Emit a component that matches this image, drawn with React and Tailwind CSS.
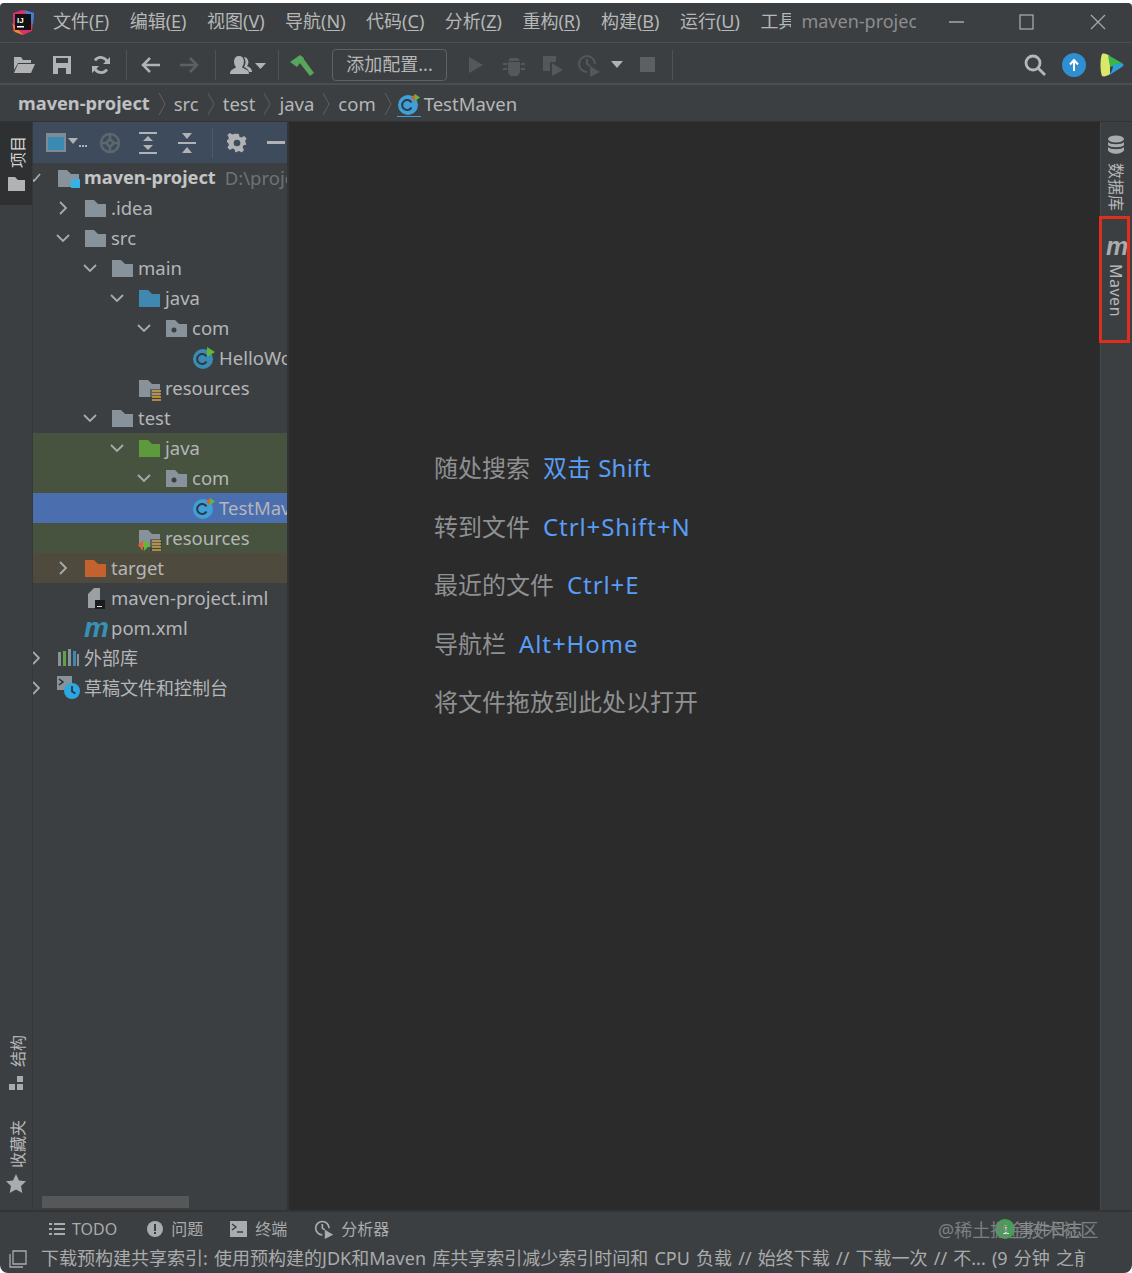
import React from 'react';

const FONT = "font-['Noto_Sans','Noto_Sans_CJK_SC',sans-serif]";

const Folder = ({ color = '#87929a', children }) => (
  <svg width="23" height="20" viewBox="0 0 23 20" className="shrink-0 overflow-visible">
    <path d="M1 2h9l4 4h8v13H1z" fill={color} />
    {children}
  </svg>
);

const ClassIcon = ({ color = '#3b8cb4', run = '#5fb83a', test }) => (
  <svg width="24" height="24" viewBox="0 0 24 24" className="shrink-0">
    <circle cx="11" cy="13" r="10" fill={color} />
    <path d="M14.5 10.5a5 5 0 1 0 0 5" fill="none" stroke="#2b3a44" strokeWidth="2" />
    {test ? (
      <>
        <path d="M14 6l4-4v7z" fill="#d8632f" />
        <path d="M18 2l5 3.500-5 3.500z" fill="#5fb83a" />
      </>
    ) : (
      <path d="M15 1l8 5-8 5z" fill={run} />
    )}
  </svg>
);

const MavenM = ({ color = '#3592b5', size = 23 }) => (
  <span className={`inline-block font-['Liberation_Sans',sans-serif] font-bold italic leading-none shrink-0`} style={{ color, fontSize: size + 5, width: size }}>
    m
  </span>
);

const treeRows = [
  { level: 0, arrow: 'check', icon: 'module', label: 'maven-project', bold: true, note: 'D:\\project\\maven-project' },
  { level: 1, arrow: 'right', icon: 'folder', label: '.idea' },
  { level: 1, arrow: 'down', icon: 'folder', label: 'src' },
  { level: 2, arrow: 'down', icon: 'folder', label: 'main' },
  { level: 3, arrow: 'down', icon: 'blue', label: 'java' },
  { level: 4, arrow: 'down', icon: 'package', label: 'com' },
  { level: 5, icon: 'class', label: 'HelloWorld' },
  { level: 3, icon: 'res', label: 'resources' },
  { level: 2, arrow: 'down', icon: 'folder', label: 'test' },
  { level: 3, arrow: 'down', icon: 'green', label: 'java', bg: 'bg-[#47523f]' },
  { level: 4, arrow: 'down', icon: 'package', label: 'com', bg: 'bg-[#47523f]' },
  { level: 5, icon: 'test', label: 'TestMaven', bg: 'bg-[#4b6eaf]' },
  { level: 3, icon: 'testres', label: 'resources', bg: 'bg-[#47523f]' },
  { level: 1, arrow: 'right', icon: 'orange', label: 'target', bg: 'bg-[#4f4a3e]' },
  { level: 1, icon: 'iml', label: 'maven-project.iml' },
  { level: 1, icon: 'pom', label: 'pom.xml' },
  { level: 0, arrow: 'right', icon: 'lib', label: '外部库', cjk: true },
  { level: 0, arrow: 'right', icon: 'scratch', label: '草稿文件和控制台', cjk: true },
];

const Arrow = ({ type }) => {
  if (!type) return null;
  const d = { right: 'M4 1l6 6-6 6', down: 'M1 4l6 6 6-6', check: 'M2 7l3 3 6-7' }[type];
  return (
    <svg width="14" height="14" viewBox="0 0 14 14" className="-ml-[4px] shrink-0" fill="none" stroke="#a8abad" strokeWidth="1.800">
      <path d={d} />
    </svg>
  );
};

const ResLines = () => (
  <>
    <rect x="12" y="11" width="12" height="12" fill="#3c3f41" opacity="0.6" />
    <path d="M14 13h9M14 16h9M14 19h9M14 22h9" stroke="#d6a13c" strokeWidth="1.600" />
  </>
);

const TreeIcon = ({ icon }) => {
  switch (icon) {
    case 'module':
      return (
        <Folder>
          <rect x="14" y="11" width="9" height="9" fill="#36b3e4" />
        </Folder>
      );
    case 'blue':
      return <Folder color="#3f88b0" />;
    case 'green':
      return <Folder color="#5c9a3d" />;
    case 'orange':
      return <Folder color="#c4622d" />;
    case 'package':
      return (
        <Folder>
          <circle cx="9" cy="12" r="2.500" fill="#3c3f41" />
        </Folder>
      );
    case 'res':
      return (
        <Folder>
          <ResLines />
        </Folder>
      );
    case 'testres':
      return (
        <Folder>
          <ResLines />
          <path d="M0 17l5-5v11z" fill="#d8632f" />
          <path d="M6 12l6 5-6 6z" fill="#5fb83a" />
        </Folder>
      );
    case 'class':
      return <ClassIcon />;
    case 'test':
      return <ClassIcon color="#3f9fd6" test />;
    case 'iml':
      return (
        <svg width="23" height="24" viewBox="0 0 23 24" className="shrink-0">
          <path d="M4 8l6-6h6v20H4z" fill="#9aa0a4" />
          <rect x="11" y="14" width="10" height="9" fill="#1c1c1c" />
          <rect x="13" y="20" width="5" height="1" fill="#ddd" />
        </svg>
      );
    case 'pom':
      return <MavenM />;
    case 'lib':
      return (
        <svg width="23" height="20" viewBox="0 0 23 20" className="shrink-0">
          <rect x="1" y="4" width="3" height="14" fill="#87929a" />
          <rect x="6" y="3" width="3" height="15" fill="#5fa346" />
          <rect x="11" y="1" width="3" height="17" fill="#87929a" />
          <rect x="16" y="3" width="3" height="15" fill="#3f88b0" />
          <rect x="20" y="6" width="2" height="12" fill="#87929a" />
        </svg>
      );
    case 'scratch':
      return (
        <svg width="24" height="24" viewBox="0 0 24 24" className="shrink-0">
          <rect x="0" y="0" width="15" height="14" fill="#87929a" />
          <path d="M2 3l4 3-4 3" fill="none" stroke="#2b2b2b" strokeWidth="1.500" />
          <circle cx="15" cy="15" r="8" fill="#2ea6e0" />
          <path d="M15 10v5.500l3.500 2" fill="none" stroke="#23323b" strokeWidth="1.600" />
        </svg>
      );
    default:
      return <Folder />;
  }
};

const TreeRow = ({ row }) => (
  <div className={`flex h-[30px] items-center whitespace-nowrap overflow-hidden ${row.bg || ''}`} style={{ paddingLeft: row.level * 27 }}>
    <span className="w-[6px] shrink-0 flex items-center overflow-visible">
      <Arrow type={row.arrow} />
    </span>
    <span className="ml-[18px] w-[27px] shrink-0 flex items-center">
      <TreeIcon icon={row.icon} />
    </span>
    <span className={`${row.bold ? 'font-bold text-[18.200px] text-[#c4c4c4]' : 'text-[#b4b6b8]'} ${row.cjk ? 'text-[18px]' : ''}`}>{row.label}</span>
    {row.note && <span className="ml-[9px] text-[#6f7274]">{row.note}</span>}
  </div>
);

const menus = [
  ['文件(', 'F', ')'],
  ['编辑(', 'E', ')'],
  ['视图(', 'V', ')'],
  ['导航(', 'N', ')'],
  ['代码(', 'C', ')'],
  ['分析(', 'Z', ')'],
  ['重构(', 'R', ')'],
  ['构建(', 'B', ')'],
  ['运行(', 'U', ')'],
];

const hints = [
  ['随处搜索', '双击 Shift', 'tracking-[0.3px]'],
  ['转到文件', 'Ctrl+Shift+N', 'tracking-[0.9px]'],
  ['最近的文件', 'Ctrl+E', 'tracking-[0.9px]'],
  ['导航栏', 'Alt+Home', 'tracking-[0.9px]'],
  ['将文件拖放到此处以打开', '', ''],
];

const Sep = ({ className = '' }) => <div className={`w-px h-[30px] bg-[#505355] shrink-0 ${className}`} />;

const Crumb = () => (
  <svg width="10" height="26" viewBox="0 0 10 26" className="mx-[3px] shrink-0" fill="none" stroke="#5f6264" strokeWidth="1">
    <path d="M2 2l6 11-6 11" />
  </svg>
);

function TitleBar() {
  return (
    <div className="h-[40px] flex items-center pb-[2px] border-b border-[#4b4e50] shrink-0">
      <svg width="26" height="26" viewBox="0 0 26 26" className="ml-[10px] shrink-0">
        <path d="M3 4l9-3 12 3-2 18-9 4-10-4z" fill="#d6336c" />
        <path d="M14 1l10 3-1 12z" fill="#3b82d8" />
        <path d="M2 14l3 9 8 3z" fill="#f08a24" />
        <rect x="5" y="5" width="16" height="16" fill="#111" />
        <text x="7" y="14" fontSize="8" fontWeight="700" fill="#fff" fontFamily="Liberation Sans">IJ</text>
        <rect x="7" y="17" width="7" height="1.500" fill="#fff" />
      </svg>
      <div className="ml-[17px] flex gap-[20.500px] text-[18px] text-[#b5b7b8] whitespace-nowrap">
        {menus.map(([a, key, c]) => (
          <span key={key}>
            {a}
            <span className="underline underline-offset-2">{key}</span>
            {c}
          </span>
        ))}
        <span className="w-[31px] overflow-hidden">工具</span>
      </div>
      <span className="ml-[10px] w-[115px] overflow-hidden whitespace-nowrap text-[18px] text-[#8b8d8f]">maven-project</span>
      <svg width="16" height="16" viewBox="0 0 16 16" className="ml-[33px] shrink-0" stroke="#a5a7a8" strokeWidth="1.300" fill="none">
        <path d="M0 8h15" />
      </svg>
      <svg width="16" height="16" viewBox="0 0 16 16" className="ml-[54px] shrink-0" stroke="#a5a7a8" strokeWidth="1.300" fill="none">
        <rect x="1" y="1" width="13" height="14" />
      </svg>
      <svg width="16" height="16" viewBox="0 0 16 16" className="ml-[55px] shrink-0" stroke="#a5a7a8" strokeWidth="1.300" fill="none">
        <path d="M1 1l14 14M15 1L1 15" />
      </svg>
    </div>
  );
}

function ToolBar() {
  return (
    <div className="h-[42px] flex items-center pt-[3px] border-b-2 border-[#4b4e50] shrink-0">
      <svg width="22" height="20" viewBox="0 0 22 20" className="ml-[13px] shrink-0" fill="#b0b2b3">
        <path d="M1 2h7l2 3h8v3H5L1 15z" />
        <path d="M5 9h17l-4 9H1z" />
      </svg>
      <svg width="20" height="20" viewBox="0 0 20 20" className="ml-[17px] shrink-0">
        <path d="M1 1h18v18H1z" fill="#b0b2b3" />
        <rect x="4" y="3" width="12" height="5" fill="#3c3f41" />
        <rect x="6" y="13" width="8" height="6" fill="#3c3f41" />
      </svg>
      <svg width="20" height="20" viewBox="0 0 20 20" className="ml-[19px] shrink-0">
        <path d="M16.500 7.500A7 7 0 0 0 4 5.500M3.500 12.500A7 7 0 0 0 16 14.500" fill="none" stroke="#b0b2b3" strokeWidth="2.800" />
        <path d="M19 2v7h-7zM1 18v-7h7z" fill="#b0b2b3" />
      </svg>
      <Sep className="ml-[15px]" />
      <svg width="20" height="18" viewBox="0 0 20 18" className="ml-[13px] shrink-0" fill="none" stroke="#b0b2b3" strokeWidth="2.500">
        <path d="M20 9H3M10 2L3 9l7 7" />
      </svg>
      <svg width="20" height="18" viewBox="0 0 20 18" className="ml-[20px] shrink-0" fill="none" stroke="#5d6062" strokeWidth="2.500">
        <path d="M0 9h17M10 2l7 7-7 7" />
      </svg>
      <Sep className="ml-[15px]" />
      <svg width="36" height="20" viewBox="0 0 36 20" className="ml-[14px] shrink-0" fill="#b0b2b3">
        <path d="M0 19c0-5 5-5 6-7-3-3-3-11 3-11s6 8 3 11c1 2 7 2 7 7z" />
        <path d="M14 2c4 0 6 6 3 9 2 1 5 2 5 6h-3c-1-3-3-4-5-5 2-3 2-7 0-10z" />
        <path d="M25 8h11l-5.500 6z" />
      </svg>
      <Sep className="ml-[12px]" />
      <svg width="26" height="24" viewBox="0 0 26 24" className="ml-[10px] shrink-0">
        <path d="M1 9l10-7 4 3-7 9z" fill="#58a55c" />
        <path d="M10 9l4-4 11 15-4 3z" fill="#58a55c" />
      </svg>
      <div className="ml-[17px] w-[115px] h-[32px] flex items-center justify-center rounded-[4px] border border-[#5f6264] text-[18px] text-[#b5b7b8] shrink-0">
        添加配置...
      </div>
      <svg width="18" height="20" viewBox="0 0 18 20" className="ml-[20px] shrink-0" fill="#555859">
        <path d="M2 2l14 8-14 8z" />
      </svg>
      <svg width="22" height="22" viewBox="0 0 22 22" className="ml-[18px] shrink-0" fill="#555859">
        <path d="M7 4h8l2 3H5zM5 8h12v9a6 6 0 0 1-12 0zM0 9h4v2H0zM18 9h4v2h-4zM0 14h4v2H0zM18 14h4v2h-4z" />
      </svg>
      <svg width="24" height="24" viewBox="0 0 24 24" className="ml-[16px] shrink-0" fill="#555859">
        <path d="M2 3h13v6H9v9H2z" />
        <path d="M11 10l11 7-11 6z" />
      </svg>
      <svg width="24" height="24" viewBox="0 0 24 24" className="ml-[12px] shrink-0" fill="none" stroke="#555859" strokeWidth="2">
        <path d="M10 19a8 8 0 1 1 8-8M10 6v5l3 2" />
        <path d="M13 13l10 6-10 5z" fill="#555859" stroke="none" />
      </svg>
      <svg width="12" height="7" viewBox="0 0 12 7" className="ml-[10px] shrink-0" fill="#b0b2b3">
        <path d="M0 0h12L6 7z" />
      </svg>
      <div className="ml-[17px] w-[15px] h-[15px] bg-[#5d6062] shrink-0" />
      <Sep className="ml-[17px]" />
      <svg width="24" height="24" viewBox="0 0 24 24" className="ml-[350px] shrink-0" fill="none" stroke="#b4b6b7" strokeWidth="2.800">
        <circle cx="10" cy="10" r="7" />
        <path d="M15 15l7 7" />
      </svg>
      <svg width="24" height="24" viewBox="0 0 24 24" className="ml-[15px] shrink-0">
        <circle cx="12" cy="12" r="12" fill="#2f8fd0" />
        <path d="M12 18V8M8 11.500L12 7l4 4.500" fill="none" stroke="#fff" strokeWidth="2" />
      </svg>
      <svg width="24" height="24" viewBox="0 0 24 24" className="ml-[14px] shrink-0">
        <path d="M2 1c2-1 5 0 8 2v18c-3 2-6 3-8 2-2-5-2-17 0-22z" fill="#d9e86a" />
        <path d="M8 2l14 8-12 4z" fill="#39b54a" />
        <path d="M22 10c2 1 2 3 0 4L8 23c3-3 5-6 5-11z" fill="#2a9fd8" />
      </svg>
    </div>
  );
}

function BreadCrumbs() {
  const parts = ['src', 'test', 'java', 'com'];
  return (
    <div className="h-[37px] flex items-center pt-[2px] pl-[18px] text-[18.500px] text-[#b5b7b8] whitespace-nowrap shrink-0 border-b border-[#323232]">
      <span className="font-bold text-[18.200px] text-[#bfc1c2]">maven-project</span>
      <span className="ml-[4px]"><Crumb /></span>
      {parts.map((p) => (
        <React.Fragment key={p}>
          <span className="mx-[4px]">{p}</span>
          <Crumb />
        </React.Fragment>
      ))}
      <span className="ml-[1px] mr-[3px] flex border-b border-[#3f9fd6]">
        <ClassIcon color="#3f9fd6" test />
      </span>
      <span>TestMaven</span>
    </div>
  );
}

function LeftRail() {
  return (
    <div className="w-[33px] shrink-0 flex flex-col text-[16px] text-[#b5b7b8] border-r border-[#36383a]">
      <div className="h-[83px] bg-[#2e3031] flex flex-col items-center pl-[3px] pt-[14px] gap-[9px] text-[#d4d4d4]">
        <span className="[writing-mode:vertical-rl] [text-orientation:sideways] rotate-180 leading-none">项目</span>
        <svg width="17" height="14" viewBox="0 0 17 14" className="-ml-[3px]">
          <path d="M0 0h7l3 3h7v11H0z" fill="#b0b2b3" />
        </svg>
      </div>
      <div className="mt-auto flex flex-col items-center pl-[3px] gap-[9px] pb-[29px]">
        <span className="[writing-mode:vertical-rl] [text-orientation:sideways] rotate-180 leading-none">结构</span>
        <svg width="15" height="15" viewBox="0 0 15 15" className="-ml-[3px]" fill="#a9abac">
          <rect x="8" y="0" width="6" height="6" />
          <rect x="0" y="8" width="6" height="6" />
          <rect x="8" y="8" width="6" height="6" />
        </svg>
      </div>
      <div className="flex flex-col items-center pl-[3px] gap-[6px] pb-[17px]">
        <span className="[writing-mode:vertical-rl] [text-orientation:sideways] rotate-180 leading-none">收藏夹</span>
        <svg width="20" height="19" viewBox="0 0 20 19" className="-ml-[3px]" fill="#a9abac">
          <path d="M10 0l3 6.500 7 .8-5 4.700 1.300 7L10 15.500 3.700 19 5 12 0 7.300l7-.8z" />
        </svg>
      </div>
    </div>
  );
}

function ProjectPanel() {
  return (
    <div className="w-[254px] shrink-0 flex flex-col text-[18.500px] overflow-hidden relative">
      <div className="h-[41px] bg-[#3d4b5c] flex items-center shrink-0">
        <svg width="22" height="20" viewBox="0 0 22 20" className="ml-[13px] shrink-0">
          <rect x="0" y="0" width="20" height="19" fill="#7f8b91" />
          <rect x="2" y="4" width="16" height="13" fill="#3a8ab3" />
        </svg>
        <svg width="19" height="10" viewBox="0 0 19 10" className="shrink-0" fill="#b0b2b3">
          <path d="M0 0h10L5 6z" />
          <rect x="11" y="7" width="2" height="2" />
          <rect x="14" y="7" width="2" height="2" />
          <rect x="17" y="7" width="2" height="2" />
        </svg>
        <svg width="22" height="22" viewBox="0 0 22 22" className="ml-[12px] shrink-0" fill="none" stroke="#5e666e" strokeWidth="2.500">
          <circle cx="11" cy="11" r="9" />
          <circle cx="11" cy="11" r="3" />
          <path d="M11 2v6M11 14v6M2 11h6M14 11h6" />
        </svg>
        <svg width="20" height="22" viewBox="0 0 20 22" className="ml-[17px] shrink-0" fill="#b0b2b3">
          <path d="M1 0h18v2H1zM1 20h18v2H1zM10 4l5 5H5zM5 13h10l-5 5z" />
        </svg>
        <svg width="20" height="22" viewBox="0 0 20 22" className="ml-[19px] shrink-0" fill="#b0b2b3">
          <path d="M5 1h10l-5 6zM1 10h18v2H1zM10 15l5 6H5z" />
        </svg>
        <div className="ml-[15px] w-px h-[30px] bg-[#4d5a6a] shrink-0" />
        <svg width="20" height="20" viewBox="0 0 24 24" className="ml-[14px] shrink-0" fill="#b0b2b3">
          <path d="M10 1h4l1 3.500 2.500 1 3.200-1.800 2.800 2.800-1.800 3.200 1 2.500L23 13v-2 3l-3.300.8-1 2.500 1.800 3.200-2.800 2.800-3.200-1.800-2.500 1L11 23h-1l-1-3.500-2.500-1-3.200 1.800L.5 17.500l1.800-3.200-1-2.500L-2 11V9l3.300-.8 1-2.500L.5 2.500 3.300 0l3.200 1.800 2.500-1zM12 8a4 4 0 1 0 0 8 4 4 0 0 0 0-8z" fillRule="evenodd" />
        </svg>
        <div className="ml-[20px] w-[18px] h-[2.500px] bg-[#b0b2b3] shrink-0" />
      </div>
      <div className="flex flex-col">
        {treeRows.map((row, i) => (
          <TreeRow key={i} row={row} />
        ))}
      </div>
      <div className="absolute left-[9px] bottom-[2px] w-[147px] h-[12px] bg-[#555759]" />
    </div>
  );
}

function Editor() {
  return (
    <div className="flex-1 bg-[#2b2b2b] border-l-2 border-[#323436] pl-[145px] pt-[317px] text-[24px]">
      {hints.map(([label, keys, track]) => (
        <div key={label} className="h-[58.500px] leading-[58px] whitespace-nowrap flex gap-[13px]">
          <span className="text-[#8e9092]">{label}</span>
          {keys && <span className={`text-[#589df6] ${track}`}>{keys}</span>}
        </div>
      ))}
    </div>
  );
}

function RightRail() {
  return (
    <div className="w-[32px] shrink-0 relative flex flex-col items-center text-[16px] text-[#b5b7b8] border-l border-[#46494b] pr-[1px]">
      <svg width="18" height="20" viewBox="0 0 18 20" className="mt-[13px] shrink-0" fill="#a9abac">
        <ellipse cx="9" cy="4" rx="8" ry="3.500" />
        <path d="M1 7c2 3 14 3 16 0v3c-2 3-14 3-16 0zM1 12c2 3 14 3 16 0v3c-2 5-14 5-16 0z" />
      </svg>
      <span className="[writing-mode:vertical-rl] [text-orientation:sideways] leading-none mt-[8px] h-[52px]">数据库</span>
      <span className="mt-[19px]">
        <MavenM color="#a9abac" size={20} />
      </span>
      <span className="[writing-mode:vertical-rl] [text-orientation:sideways] leading-none mt-[3px] tracking-[0.5px]">Maven</span>
      <div className="absolute left-[-2px] top-[94px] w-[31px] h-[127px] border-[3px] border-[#dc2f1e]" />
    </div>
  );
}

function BottomBars() {
  return (
    <div className="shrink-0 relative">
      <div className="h-[34px] flex items-center pt-[1px] border-t-2 border-[#323436] text-[16px] text-[#a9abac] whitespace-nowrap">
        <svg width="16" height="14" viewBox="0 0 16 14" className="ml-[49px] shrink-0" fill="#a9abac">
          <path d="M0 1h3v2H0zM5 1h11v2H5zM0 6h3v2H0zM5 6h11v2H5zM0 11h3v2H0zM5 11h11v2H5z" />
        </svg>
        <span className="ml-[7px]">TODO</span>
        <svg width="16" height="16" viewBox="0 0 16 16" className="ml-[30px] shrink-0">
          <circle cx="8" cy="8" r="8" fill="#a9abac" />
          <rect x="7" y="3" width="2" height="7" fill="#3c3f41" />
          <rect x="7" y="11" width="2" height="2" fill="#3c3f41" />
        </svg>
        <span className="ml-[8px]">问题</span>
        <svg width="17" height="16" viewBox="0 0 17 16" className="ml-[27px] shrink-0">
          <rect width="17" height="16" fill="#a9abac" />
          <path d="M2 3l4 3-4 3M7 11h6" fill="none" stroke="#3c3f41" strokeWidth="1.500" />
        </svg>
        <span className="ml-[8px]">终端</span>
        <svg width="20" height="20" viewBox="0 0 24 24" className="ml-[27px] shrink-0" fill="none" stroke="#a9abac" strokeWidth="2">
          <path d="M10 19a8 8 0 1 1 8-8M10 6v5l3 2" />
          <path d="M13 13l10 6-10 5z" fill="#a9abac" stroke="none" />
        </svg>
        <span className="ml-[7px]">分析器</span>
        <svg width="20" height="20" viewBox="0 0 20 20" className="ml-[606px] shrink-0">
          <circle cx="10" cy="10" r="10" fill="#3da34f" />
          <text x="7" y="15" fontSize="13" fill="#fff" fontFamily="Liberation Sans">1</text>
        </svg>
        <span className="ml-[3px] text-[#8f9192]">事件日志</span>
      </div>
      <div className="h-[29px] flex items-center text-[18px] text-[#a9abac] whitespace-nowrap">
        <svg width="18" height="18" viewBox="0 0 18 18" className="ml-[9px] shrink-0" fill="none" stroke="#a9abac" strokeWidth="1.300">
          <path d="M4 1h13v13H4z" />
          <path d="M1 4v13h13" />
        </svg>
        <span className="ml-[14px] w-[1044px] overflow-hidden [word-spacing:1.500px]">下载预构建共享索引: 使用预构建的JDK和Maven 库共享索引减少索引时间和 CPU 负载 // 始终下载 // 下载一次 // 不... (9 分钟 之前)</span>
      </div>
      <span className="absolute left-[938px] top-[7px] text-[18px] text-[#7d7f81] whitespace-nowrap">@稀土掘金技术社区</span>
    </div>
  );
}

export default function App() {
  return (
    <div className={`w-[1132px] h-[1273px] bg-white pt-[3px] overflow-hidden ${FONT}`}>
      <div className="h-[1270px] bg-[#3c3f41] rounded-t-[4px] rounded-b-[8px] flex flex-col overflow-hidden">
        <TitleBar />
        <ToolBar />
        <BreadCrumbs />
        <div className="flex-1 flex min-h-0">
          <LeftRail />
          <ProjectPanel />
          <Editor />
          <RightRail />
        </div>
        <BottomBars />
      </div>
    </div>
  );
}
